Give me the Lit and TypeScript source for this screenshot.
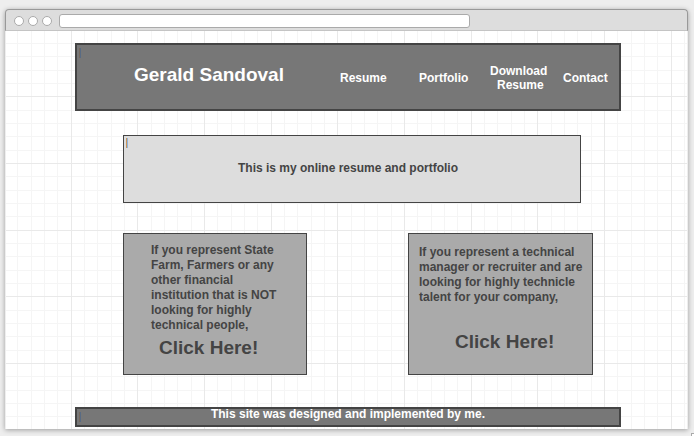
import { LitElement, html, css, svg } from "lit";
import { customElement } from "lit/decorators.js";

// One grid tile is 200px: three major cells of five minor cells each.
const MINOR = [13, 26, 40, 53, 80, 93, 106, 120, 146, 160, 173, 186];
const MAJOR = [0, 66, 133];

const lines = (at: number[], cls: string) =>
  at.map(
    (p) => svg`
      <rect class=${cls} x=${p} y="0" width="1" height="200"></rect>
      <rect class=${cls} x="0" y=${p} width="200" height="1"></rect>`
  );

@customElement("app-root")
export class AppRoot extends LitElement {
  static styles = css`
    :host {
      display: block;
      box-sizing: border-box;
      min-height: 100vh;
      padding: 9px 6px 6px 5px;
      background: #eeeeee;
      color: #444444;
      font: bold 12px/15px "Liberation Sans", Arial, sans-serif;
      position: relative;
    }
    * {
      box-sizing: border-box;
    }
    a {
      color: inherit;
      text-decoration: none;
    }
    h1,
    p {
      margin: 0;
      font-size: inherit;
    }
    .browser {
      border-radius: 4px 4px 0 0;
      box-shadow: 0 1px 5px rgba(0, 0, 0, 0.35);
    }
    .bar {
      display: flex;
      align-items: center;
      height: 22px;
      padding: 1px 8px 0;
      background: #dddddd;
      border: 1px solid #999999;
      border-bottom-color: #c4c4c4;
      border-radius: 4px 4px 0 0;
    }
    .dots {
      display: flex;
      gap: 4px;
      margin-right: 7px;
    }
    .dot {
      width: 10px;
      height: 10px;
      border: 1px solid #aaaaaa;
      border-radius: 50%;
      background: #ffffff;
    }
    .address {
      width: calc(62% - 1px);
      height: 14px;
      padding: 0 4px;
      border: 1px solid #aaaaaa;
      border-radius: 3px;
      background: #ffffff;
      font: 10px/12px "Liberation Sans", Arial, sans-serif;
      outline: none;
    }
    .paper {
      position: relative;
      margin: 0 1px;
      padding: 12px 66px 2px 69px;
      background: #ffffff;
    }
    .grid {
      position: absolute;
      inset: 0;
      width: 100%;
      height: 100%;
    }
    .minor {
      fill: #f5f5f5;
    }
    .major {
      fill: #e9e9e9;
    }
    .site {
      position: relative;
    }
    .caret {
      position: absolute;
      top: 3px;
      left: 2px;
      width: 2px;
      height: 10px;
      border-left: 1px solid #76695f;
      border-right: 1px solid #586b84;
    }
    .caret.light {
      top: 2px;
      border-left-color: #cc9558;
      border-right-color: #8fb4de;
    }
    .header {
      position: relative;
      display: grid;
      grid-template-columns: 206fr 279fr;
      align-items: center;
      height: 68px;
      padding-left: 57px;
      background: #777777;
      border: 2px solid #444444;
      color: #ffffff;
    }
    .header h1 {
      padding-bottom: 4px;
      font-size: 19px;
      line-height: 24px;
      white-space: nowrap;
    }
    .nav {
      display: grid;
      grid-template-columns: 79fr 71fr 73fr 56fr;
      align-items: center;
      justify-items: start;
      line-height: 14px;
      padding-top: 1px;
      text-align: center;
    }
    .intro {
      position: relative;
      display: flex;
      align-items: center;
      justify-content: center;
      height: 68px;
      margin: 24px 40px 30px 48px;
      padding: 0 8px 2px 0;
      background: #dddddd;
      border: 1px solid #444444;
    }
    .cards {
      display: grid;
      grid-template-columns: 184fr 185fr;
      column-gap: 101px;
      margin: 0 28px 32px 48px;
    }
    .card {
      min-height: 142px;
      background: #aaaaaa;
      border: 1px solid #444444;
    }
    .card.farm {
      padding: 9px 27px 11px;
    }
    .card.tech {
      padding: 11px 2px 11px 10px;
    }
    .cta {
      display: block;
      font-size: 19px;
      line-height: 30px;
    }
    .farm .cta {
      margin-left: 8px;
    }
    .tech .cta {
      margin: 22px 0 0 36px;
    }
    .footer {
      position: relative;
      height: 20px;
      background: #777777;
      border: 2px solid #444444;
      color: #ffffff;
      line-height: 10px;
      text-align: center;
    }
    .corner {
      position: absolute;
      right: 0;
      bottom: 0;
      width: 3px;
      height: 3px;
      border: solid #aaaaaa;
      border-width: 1px 0 0 1px;
      background: #ffffff;
    }
  `;

  render() {
    return html`
      <div class="browser">
        <div class="bar">
          <div class="dots">
            <span class="dot"></span><span class="dot"></span><span class="dot"></span>
          </div>
          <input class="address" type="text" aria-label="Address" />
        </div>
        <div class="paper">
          <svg class="grid" aria-hidden="true">
            <defs>
              <pattern id="tile" x="65" y="-1" width="200" height="200" patternUnits="userSpaceOnUse">
                ${lines(MINOR, "minor")} ${lines(MAJOR, "major")}
              </pattern>
            </defs>
            <rect width="100%" height="100%" fill="url(#tile)"></rect>
          </svg>
          <div class="site">
            <header class="header">
              <span class="caret"></span>
              <h1>Gerald Sandoval</h1>
              <nav class="nav">
                <a href="#resume">Resume</a>
                <a href="#portfolio">Portfolio</a>
                <a href="#download">Download<br />&nbsp;Resume</a>
                <a href="#contact">Contact</a>
              </nav>
            </header>
            <main>
              <section class="intro">
                <span class="caret light"></span>
                <p>This is my online resume and portfolio</p>
              </section>
              <div class="cards">
                <section class="card farm">
                  <p>
                    If you represent State Farm, Farmers or any other financial
                    institution that is NOT looking for highly technical people,
                  </p>
                  <a class="cta" href="#insurance">Click Here!</a>
                </section>
                <section class="card tech">
                  <p>
                    If you represent a technical manager or recruiter and are
                    looking for highly technicle talent for your company,
                  </p>
                  <a class="cta" href="#technical">Click Here!</a>
                </section>
              </div>
            </main>
            <footer class="footer">
              <span class="caret"></span>
              This site was designed and implemented by me.
            </footer>
          </div>
        </div>
      </div>
      <span class="corner"></span>
    `;
  }
}
